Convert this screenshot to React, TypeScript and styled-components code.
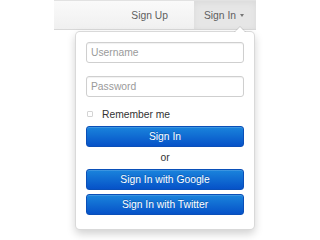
import React from "react";
import styled, { createGlobalStyle } from "styled-components";

const Global = createGlobalStyle`
  html, body { margin: 0; padding: 0; background: #ffffff; }
  body { font-family: "Liberation Sans", Arial, sans-serif; font-size: 10.3px; color: #333; }
`;

const Page = styled.div`
  width: 320px;
  height: 240px;
  overflow: hidden;
  display: flex;
  flex-direction: column;
`;

const Navbar = styled.div`
  margin-left: 54px;
  width: 202px;
  height: 30px;
  box-sizing: border-box;
  background: linear-gradient(#fafafa, #f0f0f0);
  border-top: 1px solid #e2e2e2;
  border-bottom: 1px solid #d8d8d8;
  display: flex;
  justify-content: flex-end;
  align-items: stretch;
  gap: 16px;
`;

const NavItem = styled.div<{ $active?: boolean }>`
  position: relative;
  display: flex;
  align-items: center;
  gap: 4px;
  padding: 0 ${(p) => (p.$active ? "12px" : "10px")} 0 10px;
  color: #5e5e5e;
  background: ${(p) => (p.$active ? "#e6e6e6" : "transparent")};
  box-shadow: ${(p) => (p.$active ? "inset 0 2px 6px rgba(0,0,0,0.05)" : "none")};
`;

const Caret = styled.span`
  width: 0;
  height: 0;
  border-left: 2.5px solid transparent;
  border-right: 2.5px solid transparent;
  border-top: 3px solid #777;
  margin-top: 1px;
`;

const Menu = styled.div`
  position: absolute;
  top: calc(100% + 2px);
  right: 1px;
  width: 180px;
  box-sizing: border-box;
  background: #fff;
  border: 1px solid rgba(0, 0, 0, 0.15);
  border-radius: 5px;
  box-shadow: 0 4px 9px rgba(0, 0, 0, 0.18);
  padding: 10px 10px 14px;
  display: flex;
  flex-direction: column;
  z-index: 2;

  &::before {
    content: "";
    position: absolute;
    top: -6px;
    right: 8px;
    border-left: 6px solid transparent;
    border-right: 6px solid transparent;
    border-bottom: 6px solid rgba(0, 0, 0, 0.12);
  }
  &::after {
    content: "";
    position: absolute;
    top: -5px;
    right: 9px;
    border-left: 5px solid transparent;
    border-right: 5px solid transparent;
    border-bottom: 5px solid #fff;
  }
`;

const Input = styled.input`
  height: 21px;
  box-sizing: border-box;
  border: 1px solid #cfcfcf;
  border-radius: 3px;
  padding: 0 4px;
  font-family: "Liberation Sans", Arial, sans-serif;
  font-size: 10.3px;
  color: #555;
  box-shadow: inset 0 1px 1px rgba(0, 0, 0, 0.06);
  outline: none;
  &::placeholder { color: #9a9a9a; }
  & + & { margin-top: 13px; }
`;

const Remember = styled.label`
  display: flex;
  align-items: center;
  height: 12px;
  margin: 11px 0 6px;
  color: #333;
`;

const Check = styled.span`
  width: 4px;
  height: 4px;
  border: 1px solid #d4d4d4;
  border-radius: 1px;
  margin: 0 9px 0 1px;
`;

const Button = styled.button`
  height: 21px;
  box-sizing: border-box;
  border: 1px solid #0a4fb8;
  border-radius: 3px;
  background: linear-gradient(#1a84dc, #0652c8);
  color: #fff;
  font-family: "Liberation Sans", Arial, sans-serif;
  font-size: 10.3px;
  text-shadow: 0 -1px 0 rgba(0, 0, 0, 0.2);
  padding: 0;
  box-shadow: inset 0 1px 0 rgba(255, 255, 255, 0.15);
  & + & { margin-top: 4px; }
`;

const Or = styled.div`
  height: 22px;
  line-height: 22px;
  text-align: center;
  color: #333;
`;

export default function App() {
  return (
    <Page>
      <Global />
      <Navbar>
        <NavItem>Sign Up</NavItem>
        <NavItem $active>
          Sign In <Caret />
          <Menu>
            <Input placeholder="Username" />
            <Input placeholder="Password" type="password" />
            <Remember>
              <Check />
              Remember me
            </Remember>
            <Button>Sign In</Button>
            <Or>or</Or>
            <Button>Sign In with Google</Button>
            <Button>Sign In with Twitter</Button>
          </Menu>
        </NavItem>
      </Navbar>
    </Page>
  );
}
